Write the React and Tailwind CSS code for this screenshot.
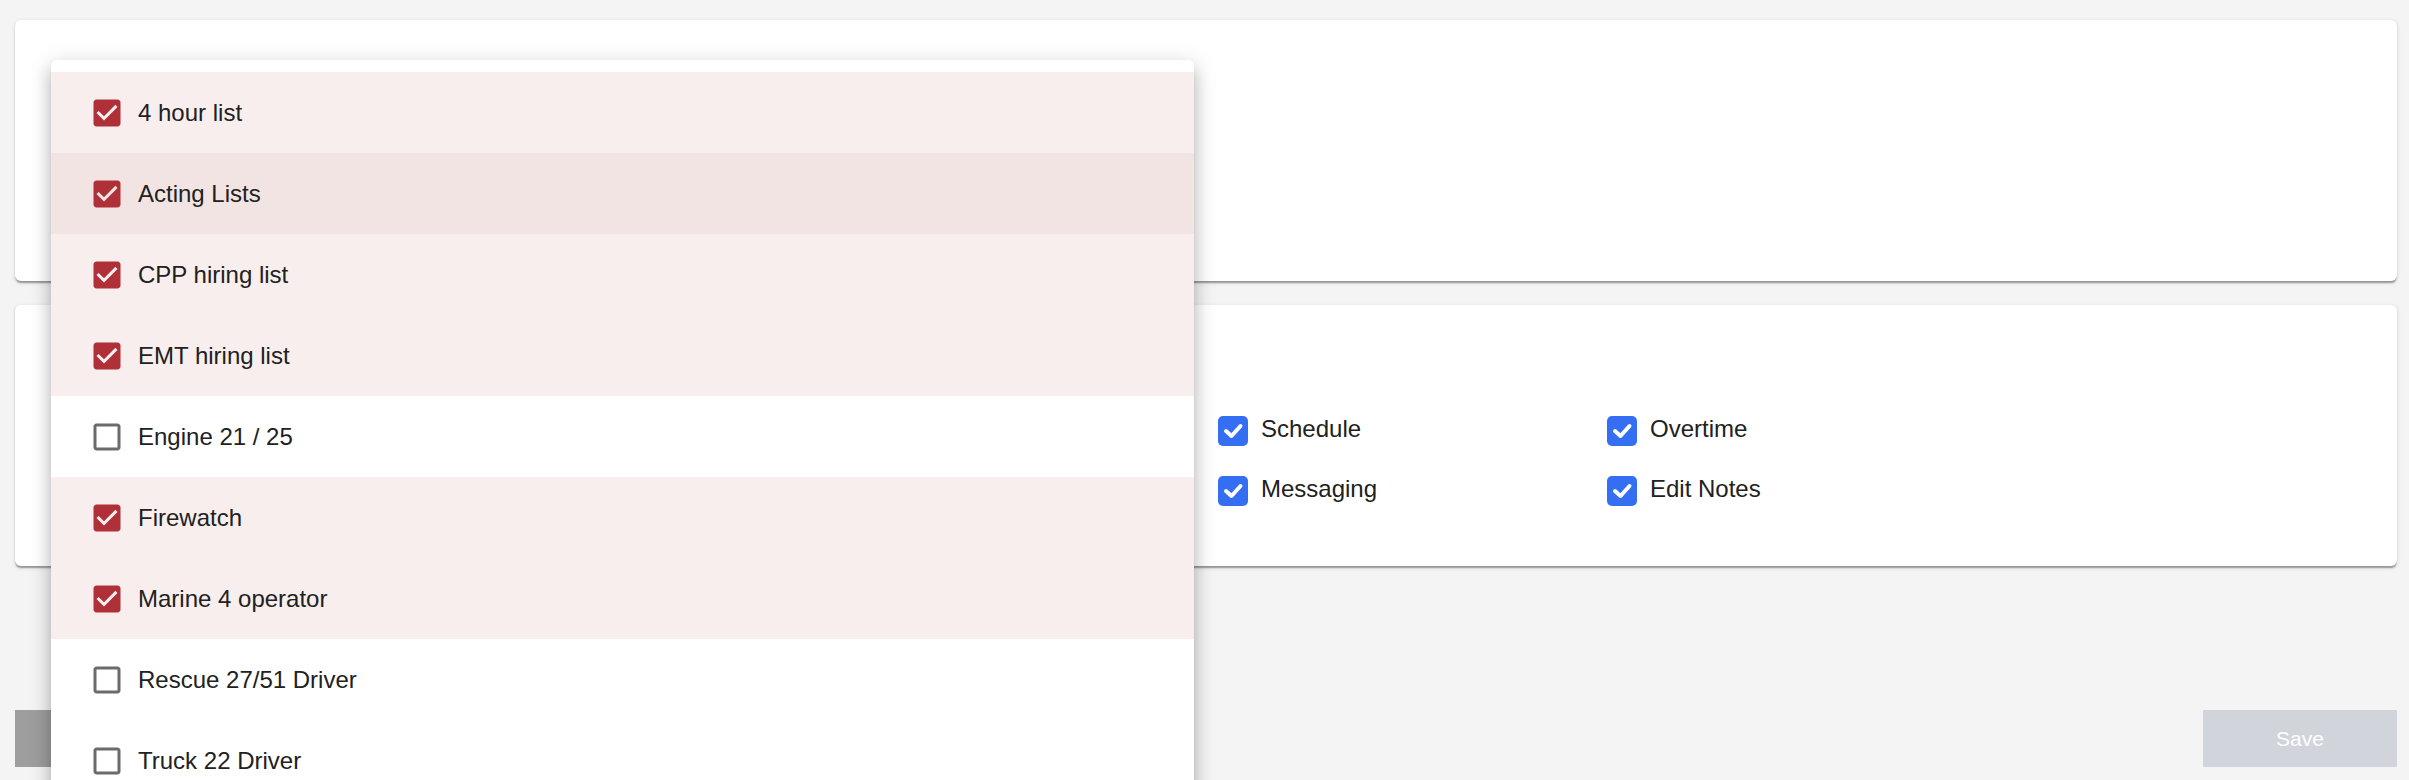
import React from "react";

const CHECKED_PATH =
  "M19 3H5c-1.11 0-2 .9-2 2v14c0 1.1.89 2 2 2h14c1.11 0 2-.9 2-2V5c0-1.1-.89-2-2-2zm-9 14l-5-5 1.41-1.41L10 14.17l7.59-7.59L19 8l-9 9z";
const BLANK_PATH =
  "M19 5v14H5V5h14m0-2H5c-1.1 0-2 .9-2 2v14c0 1.1.9 2 2 2h14c1.1 0 2-.9 2-2V5c0-1.1-.9-2-2-2z";

function MuiCheck({ checked }) {
  return (
    <span className="flex items-center justify-center p-[13.5px]">
      <svg
        viewBox="0 0 24 24"
        className={checked ? "w-[36px] h-[36px] fill-[#b03037]" : "w-[36px] h-[36px] fill-[#6b6b6b]"}
      >
        <path d={checked ? CHECKED_PATH : BLANK_PATH} />
      </svg>
    </span>
  );
}

function BlueCheck() {
  return (
    <svg viewBox="0 0 30 30" className="w-[30px] h-[30px] shrink-0">
      <rect x="0" y="0" width="30" height="30" rx="5" fill="#346ef3" />
      <path
        d="M8 15 L13.5 20 L22.5 10"
        fill="none"
        stroke="#ffffff"
        strokeWidth="4"
        strokeLinecap="round"
        strokeLinejoin="round"
      />
    </svg>
  );
}

const items = [
  { label: "4 hour list", checked: true },
  { label: "Acting Lists", checked: true, hover: true },
  { label: "CPP hiring list", checked: true },
  { label: "EMT hiring list", checked: true },
  { label: "Engine 21 / 25", checked: false },
  { label: "Firewatch", checked: true },
  { label: "Marine 4 operator", checked: true },
  { label: "Rescue 27/51 Driver", checked: false },
  { label: "Truck 22 Driver", checked: false },
];

export default function App() {
  return (
    <div className="relative h-screen overflow-hidden bg-[#f4f4f4] pl-[15px] pr-[12px] pt-[20px] font-['Liberation_Sans',Arial,sans-serif] text-[#212121]">
      {/* Card 1 */}
      <div className="h-[261px] rounded-[6px] bg-white shadow-[0_3px_1.5px_-1.5px_rgba(0,0,0,0.2),0_1.5px_1.5px_0_rgba(0,0,0,0.14),0_1.5px_4.5px_0_rgba(0,0,0,0.12)]" />

      {/* Card 2 */}
      <div className="mt-[24px] h-[261px] rounded-[6px] bg-white pt-[111px] pl-[36px] shadow-[0_3px_1.5px_-1.5px_rgba(0,0,0,0.2),0_1.5px_1.5px_0_rgba(0,0,0,0.14),0_1.5px_4.5px_0_rgba(0,0,0,0.12)]">
        <div className="grid grid-cols-[repeat(5,389px)] gap-y-[30px]">
          <label className="col-start-4 flex h-[30px] items-center gap-[13px] text-[24px] leading-[30px]">
            <BlueCheck />
            <span className="relative -top-[2px]">Schedule</span>
          </label>
          <label className="col-start-5 flex h-[30px] items-center gap-[13px] text-[24px] leading-[30px]">
            <BlueCheck />
            <span className="relative -top-[2px]">Overtime</span>
          </label>
          <label className="col-start-4 flex h-[30px] items-center gap-[13px] text-[24px] leading-[30px]">
            <BlueCheck />
            <span className="relative -top-[2px]">Messaging</span>
          </label>
          <label className="col-start-5 flex h-[30px] items-center gap-[13px] text-[24px] leading-[30px]">
            <BlueCheck />
            <span className="relative -top-[2px]">Edit Notes</span>
          </label>
        </div>
      </div>

      {/* Buttons */}
      <div className="mt-[144px] flex items-center justify-between">
        <button className="h-[57px] w-[194px] bg-[#9e9e9e]" />
        <button className="h-[57px] w-[194px] bg-[#d1d5db] text-[21px] text-white">Save</button>
      </div>

      {/* Dropdown menu */}
      <div className="absolute left-[51px] top-[60px] w-[1143px] rounded-[6px] bg-white pt-[12px] shadow-[0_7.5px_7.5px_-4.5px_rgba(0,0,0,0.2),0_12px_15px_1.5px_rgba(0,0,0,0.14),0_4.5px_21px_3px_rgba(0,0,0,0.12)]">
        <ul>
          {items.map((it) => (
            <li
              key={it.label}
              className={
                "flex h-[81px] items-center pl-[24px] text-[24px] " +
                (it.hover ? "bg-[#f3e4e4]" : it.checked ? "bg-[#f8eeee]" : "bg-white")
              }
            >
              <MuiCheck checked={it.checked} />
              <span>{it.label}</span>
            </li>
          ))}
        </ul>
      </div>
    </div>
  );
}
